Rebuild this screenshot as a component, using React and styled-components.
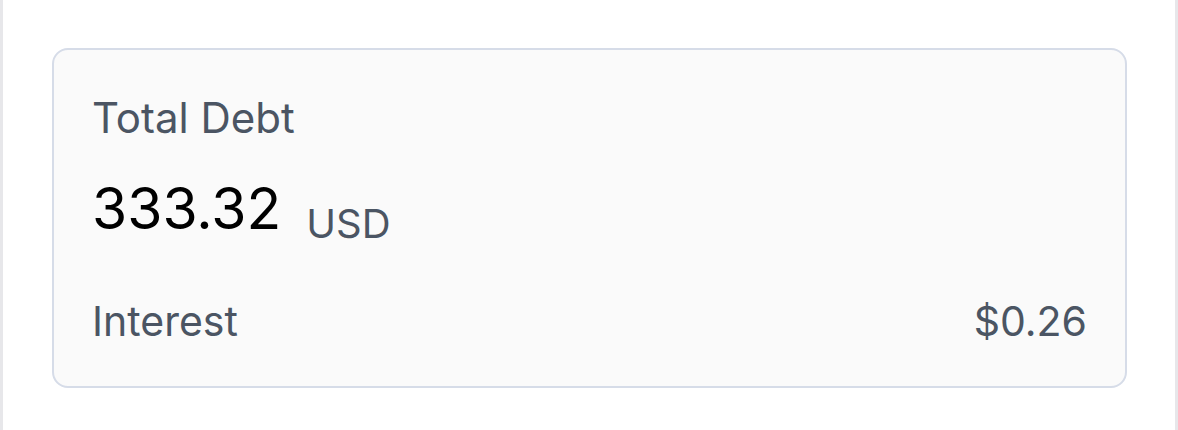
import React from "react";
import styled, { createGlobalStyle } from "styled-components";

const Global = createGlobalStyle`
  html, body { margin: 0; padding: 0; background: #ffffff; }
  body { font-family: Inter, "Noto Sans", sans-serif; -webkit-font-smoothing: antialiased; }
`;

const Page = styled.div`
  box-sizing: border-box;
  height: 430px;
  border-left: 3px solid #e7e7ea;
  border-right: 3px solid #e7e7ea;
  padding: 48px 48px 0 49px;
`;

const Card = styled.div`
  box-sizing: border-box;
  height: 340px;
  border: 2px solid #d6dce8;
  border-radius: 16px;
  background: #fafafa;
  padding: 38px 38px 0;
  display: flex;
  flex-direction: column;
`;

const Label = styled.div`
  font-size: 42px;
  line-height: 60px;
  color: #4b5563;
`;

const ValueRow = styled.div`
  display: flex;
  align-items: flex-end;
  gap: 25px;
  margin-top: 31px;
`;

const Amount = styled.span`
  font-size: 57px;
  line-height: 60px;
  color: #000000;
`;

const Unit = styled.span`
  font-size: 40px;
  line-height: 30px;
  color: #4b5563;
`;

const FooterRow = styled.div`
  display: flex;
  justify-content: space-between;
  align-items: baseline;
  margin-top: 52px;
  font-size: 41px;
  line-height: 60px;
  color: #4b5563;
`;

export default function App() {
  return (
    <>
      <Global />
      <Page>
        <Card>
          <Label>Total Debt</Label>
          <ValueRow>
            <Amount>333.32</Amount>
            <Unit>USD</Unit>
          </ValueRow>
          <FooterRow>
            <span>Interest</span>
            <span>$0.26</span>
          </FooterRow>
        </Card>
      </Page>
    </>
  );
}
